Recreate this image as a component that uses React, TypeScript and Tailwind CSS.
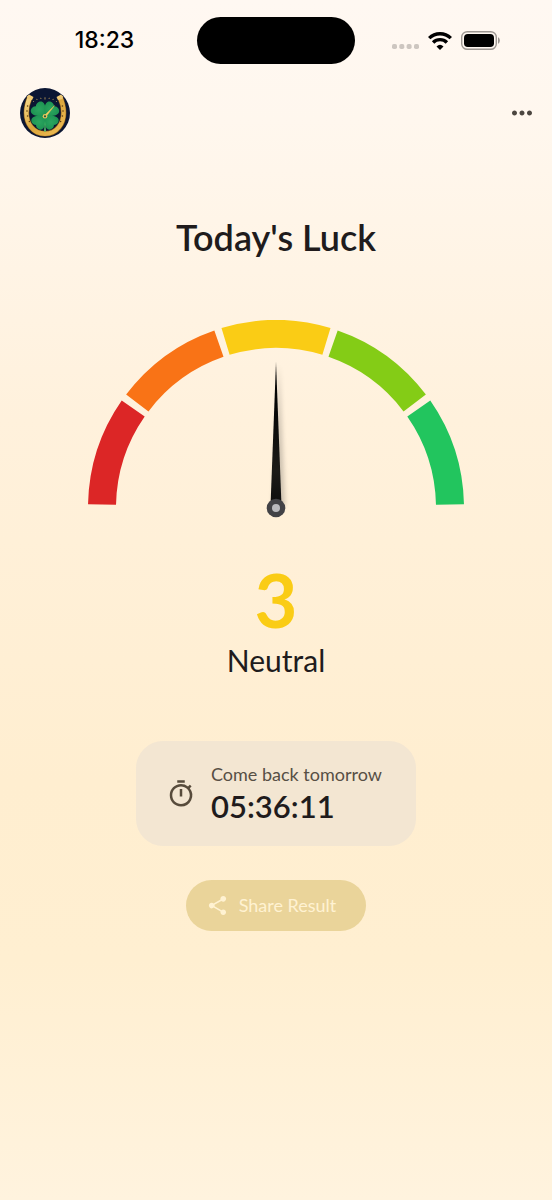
import { MdMoreHoriz, MdOutlineTimer, MdShare } from "react-icons/md";

const SEGMENTS = ["#dc2626", "#f97316", "#facc15", "#84cc16", "#22c55e"];
const CENTER_X = 188;
const CENTER_Y = 188;
const RADIUS = 174;
const GAP = 0.02;

function arcPath(index: number) {
  const step = Math.PI / SEGMENTS.length;
  const start = Math.PI - index * step - GAP;
  const end = Math.PI - (index + 1) * step + GAP;
  const point = (a: number) =>
    `${(CENTER_X + RADIUS * Math.cos(a)).toFixed(2)} ${(CENTER_Y - RADIUS * Math.sin(a)).toFixed(2)}`;
  return `M${point(start)} A${RADIUS} ${RADIUS} 0 0 1 ${point(end)}`;
}

function StatusBar() {
  return (
    <div className="grid h-16 grid-cols-[1fr_158px_1fr] pt-[17px]">
      <div className="flex items-center justify-center pl-3 font-['Inter',sans-serif] text-[23px] font-medium leading-none text-black">
        18:23
      </div>
      <div className="h-[47px] rounded-full bg-black" />
      <div className="flex items-center justify-center gap-[9px] pr-4">
        <svg width="27" height="20" viewBox="0 0 27 20" aria-hidden="true" fill="#cdc6c0">
          <rect x="0" y="13" width="5" height="5" rx="1.8" />
          <rect x="7.3" y="13" width="5" height="5" rx="1.8" />
          <rect x="14.6" y="13" width="5" height="5" rx="1.8" />
          <rect x="22" y="13" width="5" height="5" rx="1.8" />
        </svg>
        <svg width="24" height="18" viewBox="0 0 24 18" aria-hidden="true">
          <g fill="none" stroke="#000" strokeWidth="3.4">
            <path d="M1.2 6.1 A15.5 15.5 0 0 1 22.8 6.1" />
            <path d="M5.1 10.5 A9.8 9.8 0 0 1 18.900 10.5" />
          </g>
          <path d="M12 18 L8.500 14.400 A5.2 5.2 0 0 1 15.500 14.400 Z" fill="#000" />
        </svg>
        <svg width="39" height="19" viewBox="0 0 39 19" aria-hidden="true">
          <rect x="0.7" y="0.7" width="34.6" height="17.6" rx="5.6" fill="none" stroke="#9c9691" strokeWidth="1.4" />
          <rect x="3" y="3" width="30" height="13" rx="3.8" fill="#000" />
          <path d="M37 6.2 C39.4 7.2 39.4 11.8 37 12.8 Z" fill="#9c9691" />
        </svg>
      </div>
    </div>
  );
}

function Logo() {
  const leaf =
    "M0 0 C-3.500 -2 -9 -8 -7.800 -12 C-6.600 -15.500 -1.500 -15.500 0 -13.200 C1.500 -15.500 6.600 -15.500 7.800 -12 C9 -8 3.500 -2 0 0 Z";
  return (
    <svg width="50" height="50" viewBox="0 0 50 50" role="img" aria-label="Luck meter">
      <defs>
        <clipPath id="logo-clip">
          <circle cx="25" cy="25" r="25" />
        </clipPath>
        <linearGradient id="gold" x1="0" y1="0" x2="1" y2="1">
          <stop offset="0" stopColor="#f6d888" />
          <stop offset="0.5" stopColor="#dca63c" />
          <stop offset="1" stopColor="#eebd55" />
        </linearGradient>
        <radialGradient id="leaf" gradientUnits="userSpaceOnUse" cx="0" cy="-9" r="12">
          <stop offset="0" stopColor="#2ca660" />
          <stop offset="1" stopColor="#168a4b" />
        </radialGradient>
      </defs>
      <g clipPath="url(#logo-clip)">
        <rect width="50" height="50" fill="#0b1633" />
        <path d="M10 9 C5.5 19 4.5 31 11 39 C18 48 32 48 39 39 C45.5 31 44.5 19 40 9" fill="none" stroke="#7d541d" strokeWidth="5.6" />
        <path d="M10 9 C5.5 19 4.5 31 11 39 C18 48 32 48 39 39 C45.5 31 44.5 19 40 9" fill="none" stroke="url(#gold)" strokeWidth="4.4" />
        <path d="M7 8.5 L9 6.5 L13.5 9 L12 12 L7.5 11 Z M43 8.5 L41 6.5 L36.5 9 L38 12 L42.5 11 Z" fill="#efc873" />
        <g fill="#5b3b14">
          <circle cx="7.6" cy="18" r="0.8" />
          <circle cx="7" cy="23" r="0.8" />
          <circle cx="7.6" cy="28" r="0.8" />
          <circle cx="9.4" cy="33.5" r="0.8" />
          <circle cx="42.4" cy="18" r="0.8" />
          <circle cx="43" cy="23" r="0.8" />
          <circle cx="42.4" cy="28" r="0.8" />
          <circle cx="40.6" cy="33.5" r="0.8" />
        </g>
        <path
          d="M14 14 L13.2 13.1 M17.2 12 L16.6 10.9 M21 11 L20.700 9.8 M25 11.5 L25 9.3 M29 11 L29.3 9.8 M32.8 12 L33.4 10.9 M36 14 L36.8 13.1"
          fill="none"
          stroke="#c9a55a"
          strokeWidth="0.8"
        />
        <g transform="translate(25 28)" fill="url(#leaf)">
          <path d={leaf} transform="rotate(-43)" />
          <path d={leaf} transform="rotate(43)" />
          <path d={leaf} transform="rotate(135) scale(0.95)" />
          <path d={leaf} transform="rotate(-135) scale(0.95)" />
        </g>
        <path d="M25 33 L26 43.5 L24 43.5 Z" fill="#55c26b" />
        <path d="M25.8 29 L34.5 17.6 L24.4 27.6 Z" fill="#f3d36c" stroke="#e2bb4f" strokeWidth="0.5" />
        <circle cx="25" cy="28.3" r="2.3" fill="#e8c35c" />
        <circle cx="25" cy="28.3" r="1.1" fill="#22583a" />
      </g>
    </svg>
  );
}

function Gauge() {
  return (
    <svg width="376" height="198" viewBox="0 0 376 198" role="img" aria-label="Luck gauge: 3 out of 5" className="max-w-full">
      <defs>
        <linearGradient id="needle" x1="0" y1="0" x2="0" y2="1">
          <stop offset="0" stopColor="#050505" />
          <stop offset="0.3" stopColor="#050505" />
          <stop offset="0.75" stopColor="#1c1b18" />
          <stop offset="1" stopColor="#0c0c0c" />
        </linearGradient>
        <filter id="needle-shadow" x="-2" y="-0.1" width="5" height="1.2">
          <feGaussianBlur stdDeviation="2.5" />
        </filter>
      </defs>
      {SEGMENTS.map((color, index) => (
        <path key={color} d={arcPath(index)} fill="none" stroke={color} strokeWidth="28" />
      ))}
      <path d="M191 44 L197 186 L185 186 Z" fill="#000" opacity="0.2" filter="url(#needle-shadow)" />
      <path d="M188 42 L193.5 186 L182.5 186 Z" fill="url(#needle)" />
      <circle cx="188" cy="188" r="9.3" fill="#424246" />
      <circle cx="188" cy="188" r="4" fill="#b9b9bd" />
    </svg>
  );
}

export default function App() {
  return (
    <div className="flex min-h-screen flex-col bg-[linear-gradient(180deg,#fff8f2_0%,#fff7ee_10%,#fff1dc_35%,#ffeed0_65%,#ffefd1_80%,#fff3de_100%)] font-['Lato',sans-serif] text-[#201b1c]">
      <StatusBar />
      <header className="mt-6 flex items-center justify-between pl-5 pr-[15px]">
        <Logo />
        <button type="button" aria-label="More options" className="text-[#4c4640]">
          <MdMoreHoriz size={30} />
        </button>
      </header>
      <main className="flex flex-col items-center">
        <h1 className="mt-[75px] text-[36px] font-semibold leading-[48px]">Today&apos;s Luck</h1>
        <div className="mt-[59px]">
          <Gauge />
        </div>
        <p className="mt-[38px] text-[74px] font-bold leading-[88px] text-[#facc15]">3</p>
        <p className="-mt-0.5 text-[30px] leading-[36px]">Neutral</p>
        <section className="mt-[63px] flex h-[105px] items-center gap-[15px] rounded-[27px] bg-[#f3e6d2] px-[30px]">
          <MdOutlineTimer size={30} className="text-[#574b3b]" aria-hidden="true" />
          <div className="min-w-[175px]">
            <p className="text-[18px] leading-6 text-[#574f45]">Come back tomorrow</p>
            <p className="text-[31px] font-semibold leading-10">05:36:11</p>
          </div>
        </section>
        <button
          type="button"
          disabled
          className="mt-[34px] flex h-[51px] items-center gap-[10px] rounded-full bg-[#ead49a] pl-5 pr-[30px] text-[18px] text-[#fff2d2]"
        >
          <MdShare size={23} aria-hidden="true" />
          Share Result
        </button>
      </main>
    </div>
  );
}
